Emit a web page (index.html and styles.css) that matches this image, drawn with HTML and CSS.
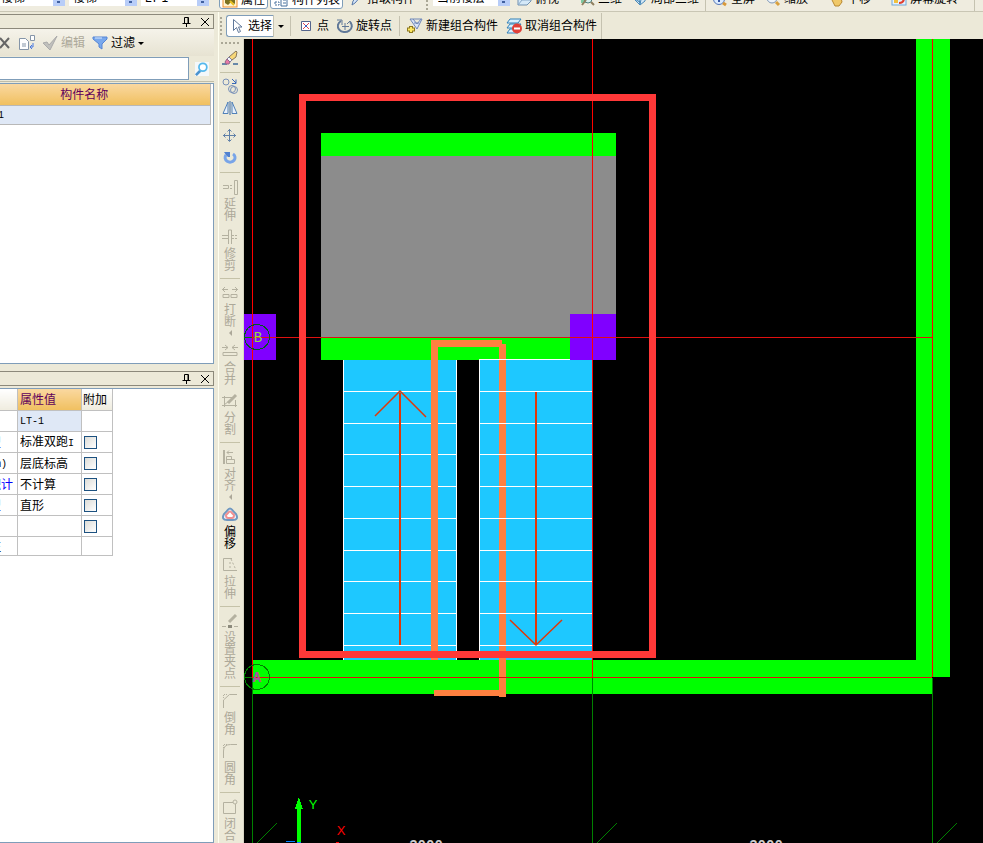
FILE: index.html
```html
<!DOCTYPE html>
<html lang="zh-CN">
<head>
<meta charset="utf-8">
<title>LT-1</title>
<link rel="stylesheet" href="styles.css">
</head>
<body>
<div class="app">
  <header class="topbar">
    <div class="combos">
      <select class="combo" aria-label="楼层"><option>楼梯</option></select>
      <select class="combo" aria-label="类型"><option>楼梯</option></select>
      <select class="combo" aria-label="构件"><option>LT-1</option></select>
    </div>
    <div class="topitems">
      <button class="tb on"><svg viewBox="0 0 16 16"><rect x="1" y="1" width="14" height="14" fill="#fff3d0" stroke="#f09030"/><path d="M3 6l5 2 5-3v7l-4-2-3 3-3-2z" fill="#7a7020"/><path d="M8 9l4 4" stroke="#e8c020" stroke-width="2"/></svg>属性</button>
      <button class="tb on"><svg viewBox="0 0 16 16"><path d="M2 3h4v3H2zM2 10h4v3H2z" fill="#fff" stroke="#49709c" stroke-dasharray="2 1"/><path d="M8 2h6v12H8z" fill="#fff" stroke="#49709c"/><path d="M10 5h3M10 8h3M10 11h3" stroke="#49709c"/></svg>构件列表</button>
      <button class="tb pick"><svg viewBox="0 0 16 16"><path d="M4 14l1-4 7-8 2 2-7 8z" fill="#d5e5fa" stroke="#5878a8"/></svg>拾取构件</button>
      <i class="grip"></i>
      <select class="combo floor" aria-label="当前楼层"><option>当前楼层</option></select>
      <button class="tb wide"><svg viewBox="0 0 16 16"><path d="M2 5l4-3h9v8l-4 4H2z" fill="#d4e8f8" stroke="#7090b0"/><path d="M2 14l4-5h9M6 2v7" fill="none" stroke="#88a8c8"/></svg>俯视</button>
      <button class="tb"><svg viewBox="0 0 16 16"><path d="M2 5h6v7H2z" fill="#7ec8a0"/><circle cx="9" cy="8" r="4" fill="#d8f0f0" stroke="#508080"/><path d="M12 11l3 3M3 14l4-5" stroke="#908060" stroke-width="2"/></svg>三维</button>
      <button class="tb"><svg viewBox="0 0 16 16"><path d="M2 8l4-5h8l-1 7-5 4z" fill="#d5e8f5" stroke="#4888b8"/><path d="M3 8l6 4M6 4l2 9M10 4l-2 9" stroke="#4888b8"/></svg>局部三维</button>
      <i class="vsep"></i>
      <button class="tb"><svg viewBox="0 0 16 16"><circle cx="7" cy="8" r="5.500" fill="#dcecff" stroke="#5878b8"/><path d="M7 5v6M4 8h6" stroke="#3858a8" stroke-width="2"/><path d="M11 12l3 2" stroke="#d89838" stroke-width="3"/></svg>全屏</button>
      <button class="tb wide"><svg viewBox="0 0 16 16"><circle cx="7" cy="7" r="5" fill="#eef4fa" stroke="#8098b8"/><path d="M11 11l3 3" stroke="#d8a040" stroke-width="3"/></svg>缩放</button>
      <button class="tb wide"><svg viewBox="0 0 16 16"><path d="M3 7l3 1V3l3 3 4 1 1 4-3 4H7z" fill="#f0c868" stroke="#b88830"/></svg>平移</button>
      <button class="tb wide"><svg viewBox="0 0 16 16"><rect x="1" y="2" width="14" height="12" fill="#e4f2ff" stroke="#70a8d8"/><path d="M3 9h4v3H3z" fill="#f0c040"/><path d="M8 12q5 0 5-5" fill="none" stroke="#e04030" stroke-width="2"/></svg>屏幕旋转</button>
      <i class="vsep"></i>
    </div>
  </header>

  <div class="main">
    <aside class="dock">
      <section class="panel list">
        <div class="title">
          <button class="tiny" aria-label="固定"><svg viewBox="0 0 10 10"><path d="M2.500 6V.5h4V6M.5 6.500h8M4.500 7v3" fill="none" stroke="#000"/><path d="M6 1v5" stroke="#000"/></svg></button>
          <button class="tiny" aria-label="关闭"><svg viewBox="0 0 10 10"><path d="M1 1l8 8M9 1L1 9" stroke="#000"/></svg></button>
        </div>
        <div class="ltools">
          <button class="tb" aria-label="删除"><svg viewBox="0 0 16 16"><path d="M4 3l9 10M13 3L4 13" stroke="#666" stroke-width="2"/></svg></button>
          <button class="tb" aria-label="复制"><svg viewBox="0 0 16 16"><path d="M.5 3.500h6l3 3v8h-9zM3 9h4M3 11h4M11.500.5h4v5h-4z" fill="#fff" stroke="#8595a8"/><path d="M14 8v4h-3M13 10l-2 2 2 2" fill="none" stroke="#4878e0"/></svg></button>
          <button class="tb off"><svg viewBox="0 0 16 16"><path d="M1 8l4-1 2 3 8-9-7 14z" fill="#c0c0bc" stroke="#aaa"/></svg>编辑</button>
          <button class="tb"><svg viewBox="0 0 16 16"><path d="M1 2h14v2l-5 5v5l-3-2V9L1 4z" fill="#79a8ec" stroke="#5585d5"/><path d="M3 3h7" stroke="#d8e8ff"/></svg>过滤<i class="down"></i></button>
        </div>
        <div class="search">
          <input type="text" aria-label="搜索构件">
          <button class="find" aria-label="搜索"><svg viewBox="0 0 16 16"><path d="M0 0h16v16H0z" fill="#f4f8fa"/><path d="M6 10l-5 5" stroke="#4c94d0" stroke-width="3"/><circle cx="9" cy="6" r="4.500" fill="#fff" stroke="#55b8ec" stroke-width="2"/></svg></button>
        </div>
        <div class="well">
          <table class="names">
            <thead><tr><th>构件名称</th></tr></thead>
            <tbody><tr><td>LT-1</td></tr></tbody>
          </table>
        </div>
      </section>
      <section class="panel props">
        <div class="title">
          <button class="tiny" aria-label="固定"><svg viewBox="0 0 10 10"><path d="M2.500 6V.5h4V6M.5 6.500h8M4.500 7v3" fill="none" stroke="#000"/><path d="M6 1v5" stroke="#000"/></svg></button>
          <button class="tiny" aria-label="关闭"><svg viewBox="0 0 10 10"><path d="M1 1l8 8M9 1L1 9" stroke="#000"/></svg></button>
        </div>
        <div class="well">
          <table class="grid">
            <thead><tr><th class="n"></th><th class="v">属性值</th><th class="c">附加</th></tr></thead>
            <tbody>
              <tr><td>名称</td><td class="cur">LT-1</td><td></td></tr>
              <tr><td class="blue">楼梯类型</td><td>标准双跑<span class="m">I</span></td><td><input type="checkbox" aria-label="楼梯类型"></td></tr>
              <tr><td>底标高<span class="m">(m)</span></td><td>层底标高</td><td><input type="checkbox" aria-label="底标高"></td></tr>
              <tr><td class="blue">建筑面积计</td><td>不计算</td><td><input type="checkbox" aria-label="建筑面积计"></td></tr>
              <tr><td class="blue">梯段类型</td><td>直形</td><td><input type="checkbox" aria-label="梯段类型"></td></tr>
              <tr><td>备注</td><td></td><td><input type="checkbox" aria-label="备注"></td></tr>
              <tr class="last"><td>其它标注</td><td></td><td></td></tr>
            </tbody>
          </table>
        </div>
      </section>
    </aside>

    <main class="work">
      <div class="toolbar">
        <i class="grip"></i>
        <button class="tb sel"><svg viewBox="0 0 16 16"><path d="M4.500 1.500v11l3-3 2 5 2-1-2-4.500h3.500z" fill="#fff" stroke="#60789a"/></svg>选择</button>
        <button class="drop" aria-label="选择方式"><i class="down"></i></button>
        <i class="vsep"></i>
        <button class="tb"><svg viewBox="0 0 16 16"><path d="M3.500 3.500h9v9h-9z" fill="#fff" stroke="#55658c"/><path d="M5 5l6 6M11 5l-6 6" stroke="#e04050"/><path d="M7 7h2v2H7z" fill="#4060c0"/></svg>点</button>
        <button class="tb"><svg viewBox="0 0 16 16"><path d="M4 3a7 6 0 1 0 9 1" fill="none" stroke="#607898" stroke-width="2"/><path d="M0 2h5v5M15 7l-2-4-3 3M8 5v7M5 8.500h7" fill="none" stroke="#607898"/></svg>旋转点</button>
        <i class="vsep"></i>
        <button class="tb"><svg viewBox="0 0 16 16"><path d="M3 1h12l-5 10zM6 1l4 5 4-5M7 5h5" fill="#d8e4f8" stroke="#7088b8"/><path d="M4 8v7M0 11.500h8" stroke="#8c7820" stroke-width="4"/><path d="M4 9v5M1 11.500h6" stroke="#ffe860" stroke-width="2"/></svg>新建组合构件</button>
        <button class="tb"><svg viewBox="0 0 16 16"><path d="M4 1h11l-3 4H1zM4 6h11l-3 4H1zM4 11h11l-3 4H1z" fill="#d8f0ff" stroke="#3080b8"/><circle cx="11" cy="10.500" r="5" fill="#e04038"/><path d="M8 10.500h6" stroke="#fff" stroke-width="2"/></svg>取消组合构件</button>
        <i class="vsep end"></i>
      </div>
      <div class="body">
        <nav class="vtools">
          <i class="hgrip"></i>
          <button class="vt" aria-label="删除"><svg viewBox="0 0 16 16"><path d="M0 14h5M11 14h5" stroke="#6888a8" stroke-width="2"/><path d="M7 7l7-6 1 1-1 5-4 3z" fill="#f8d878" stroke="#88775a"/><path d="M7 7l3 3-2 2-3-3z" fill="#f4f4fa" stroke="#8080a0"/><path d="M5 9l3 3-1 2H4l-1-2z" fill="#e878a8" stroke="#906888"/></svg></button>
          <hr>
          <button class="vt" aria-label="复制"><svg viewBox="0 0 16 16"><g fill="none" stroke="#7890b8"><circle cx="4" cy="4" r="3"/><circle cx="10" cy="11" r="3.500"/><circle cx="12" cy="12" r="3.500"/></g><path d="M10 1l4 4M14 1.500V5.500h-4" fill="none" stroke="#3868b8"/></svg></button>
          <button class="vt" aria-label="镜像"><svg viewBox="0 0 16 16"><path d="M6 2v11.500H1zM10 2v11.500h5z" fill="#e8f0fa" stroke="#5080b8"/><path d="M8 1v14" stroke="#3868a8"/></svg></button>
          <hr>
          <button class="vt" aria-label="移动"><svg viewBox="0 0 16 16"><path d="M7.500 1v12M1 7.500h13M5.500 3.500l2-2 2 2M5.500 11.500l2 2 2-2M3.500 5.500l-2 2 2 2M11.500 5.500l2 2-2 2" fill="none" stroke="#6080a8"/></svg></button>
          <button class="vt" aria-label="旋转"><svg viewBox="0 0 16 16"><path d="M4 5a5 4.500 0 1 0 7-1" fill="none" stroke="#78a4e8" stroke-width="3"/><path d="M2 2h6v5H6L4 5z" fill="#5080d0"/></svg></button>
          <hr>
          <button class="vt off"><svg viewBox="0 0 16 16"><path d="M1 6.500h5.500v3H1M8 6.500h2M8 9.500h2M12.500 1.500h3v14h-3z"/></svg><span>延伸</span></button>
          <button class="vt off"><svg viewBox="0 0 16 16"><path d="M0 6.500h6M0 9.500h6M10 6.500h2M13 6.500h2M10 9.500h2M13 9.500h2M6.500 15V1h3v14"/></svg><span>修剪</span></button>
          <hr>
          <button class="vt off"><svg viewBox="0 0 16 16"><path d="M0 4.500h6M3 2L.5 4.500 3 7M10 4.500h6M13 2l2.500 2.500L13 7M1 9.500h6v3H1zM9 9.500h6v3H9z"/></svg><span>打断</span><i class="left"></i></button>
          <button class="vt off"><svg viewBox="0 0 16 16"><path d="M0 4.500h6M3 2l3 2.500L3 7M10 4.500h6M13 2l-3 2.500L13 7M1 9.500h14v3H1z"/></svg><span>合并</span></button>
          <button class="vt off"><svg viewBox="0 0 16 16"><path d="M0 4.500h10M2.500 3v11M0 12.500h15M13.500 7v7M2 12l5-4"/><path d="M6 10l8-8" stroke-width="3"/></svg><span>分割</span></button>
          <hr>
          <button class="vt off"><svg viewBox="0 0 16 16"><path d="M2 1v14" stroke-width="2"/><path d="M5 3.500h6M7 1.500L5 3.500l2 2M4.500 7.500h5v3h3v4h-8zM4 10.500h6"/></svg><span>对齐</span><i class="left"></i></button>
          <button class="vt"><svg viewBox="0 0 16 16"><path d="M5 4q3-5 6 0l3 3q3 6-3 6H5q-6 0-3-6z" fill="#eaf4ff" stroke="#7098c0" stroke-width="2"/><path d="M6 6q2-3 4 0l2 2q0 3-2 3H6q-2 0-2-3z" fill="#fff" stroke="#f09090" stroke-width="2"/></svg><span>偏移</span></button>
          <button class="vt off"><svg viewBox="0 0 16 16"><path d="M10 1.500H1.500v12H15"/><path d="M9 2l5 11M8 5v8" stroke-dasharray="2 2"/></svg><span>拉伸</span></button>
          <hr>
          <button class="vt off"><svg viewBox="0 0 16 16"><path d="M7 9l7-7" stroke-width="3"/><path d="M0 13.500h4M12 13.500h4"/><path d="M6 12h4v3H6z" fill="#8c8a7c" stroke="none"/></svg><span>设置夹点</span></button>
          <hr>
          <button class="vt off"><svg viewBox="0 0 16 16"><path d="M1.500 15V7l6-5.500H15"/><path d="M1.500 5V1.500H6" stroke-dasharray="1 1"/></svg><span>倒角</span></button>
          <button class="vt off"><svg viewBox="0 0 16 16"><path d="M1.500 15V8q0-6.500 7-6.500H15"/><path d="M1.500 5V1.500H6" stroke-dasharray="1 1"/></svg><span>圆角</span></button>
          <hr>
          <button class="vt off"><svg viewBox="0 0 16 16"><path d="M11 3.500H1.500v11h12V5"/><circle cx="13" cy="3" r="2"/></svg><span>闭合</span></button>
        </nav>
        <svg class="canvas" role="img" aria-label="平面图">
          <g transform="translate(-244 -39)" shape-rendering="crispEdges">
            <path fill="#0f0" d="M916 39h34v638h-18v17H252v-34h664zM321 133h295v23H321zM321 337h295v23H321z"/>
            <path fill="#8c8c8c" d="M321 156h295v181H321z"/>
            <path fill="#1ec8ff" d="M343 360h114v300H343zM479 360h114v300H479z"/>
            <path fill="#ff8040" d="M499 344h7v353h-7zM434 690h66v6h-66z"/>
            <path fill="none" stroke="#fff" d="M343.500 360v300M456.500 360v300M479.500 359v301M479 359.500h113M343 391.500h249M343 423.500h249M343 454.500h249M343 486.500h249M343 518.500h249M343 550.500h249M343 581.500h249M343 613.500h249M343 645.500h249"/>
            <path fill="#000" d="M457 360h22v300h-22z"/>
            <path fill="#ff8040" d="M431 340h71v7h-64v313h-7zM499 344h7v15h-7z"/>
            <path fill="none" stroke="#e03808" stroke-width="2" d="M400 393v252M536 392v253"/>
            <path fill="none" stroke="#e03808" stroke-width="1.500" shape-rendering="auto" d="M375 416l25-25 26 26M510 620l26 25 26-25"/>
            <path fill="#8000ff" d="M244 314h32v46h-32zM570 314h46v46h-46z"/>
            <path fill="none" stroke="#f00" d="M252.500 39v638M592.500 39v638M932.500 39v638"/>
            <path fill="none" stroke="#e01010" d="M252 337.500h680M252 677.500h680"/>
            <path fill="none" stroke="#008000" d="M252.500 678v165M592.500 678v165M932.500 678v165M244 337.500h8M244 677.500h8M257 843l20-20M597 843l20-20M937 843l20-20"/>
            <circle cx="257" cy="337" r="12.500" fill="none" stroke="#005a20"/>
            <circle cx="257" cy="677" r="12.500" fill="none" stroke="#008000"/>
            <path fill="none" stroke="#ff3838" stroke-width="7" d="M302.500 97.500h350v557h-350z"/>
            <path fill="#0f0" d="M299 797l4 12h-2v34h-4v-34h-2z"/>
            <path fill="#0080ff" d="M286 841h9v1h-9zM297 842h4v1h-4z"/>
            <path fill="#f00" d="M336 842h3v1h-3z"/>
          </g>
          <g transform="translate(-244 -39)" text-anchor="middle">
            <text class="axis b" x="258" y="342">B</text>
            <text class="axis a" x="257" y="682">A</text>
            <text class="ucs y" x="313" y="809">Y</text>
            <text class="ucs x" x="341" y="835">X</text>
            <text class="dim" x="426" y="850">3000</text>
            <text class="dim" x="766" y="850">3000</text>
          </g>
        </svg>
      </div>
    </main>
  </div>
</div>
</body>
</html>
```
FILE: styles.css
```css
* { box-sizing: border-box; }
body {
  margin: 0;
  background: #ece9d8;
  color: #000;
  font: 12px/12px "Liberation Sans", "Noto Sans CJK SC", sans-serif;
}
button, input, select { font: inherit; color: inherit; }
button { border: 0; margin: 0; padding: 0; background: none; }
svg { display: block; flex: none; }
.app { display: flex; flex-direction: column; height: 100vh; overflow: hidden; }

/* upper toolbar, scrolled half out of view */
.topbar {
  display: flex;
  align-items: flex-end;
  height: 12px;
  flex: none;
  overflow: hidden;
  border-bottom: 1px solid #c9c6b4;
  background: #efecdf;
}
.combos { display: flex; gap: 4px; width: 218px; flex: none; margin-left: -3px; padding-bottom: 5px; }
.combo {
  appearance: none;
  width: 68px;
  height: 16px;
  padding: 0 4px;
  border: 0;
  border-radius: 0;
  background: linear-gradient(#4060a0, #4060a0) right 5px bottom 3px / 3px 2px no-repeat,
    linear-gradient(#b8cdf8, #b8cdf8) right / 12px 100% no-repeat, #fff;
}
.topitems { display: flex; align-items: flex-end; gap: 2px; height: 24px; flex: none; margin-left: 4px; }
.topitems .floor { width: 77px; margin-bottom: 5px; }
.topitems .tb { height: 24px; padding: 0 4px; }
.topitems .on { height: 19px; margin-bottom: 2px; padding: 0 2px; border: 1px solid #7f9db9; border-radius: 3px; background: #fff; }
.topitems .pick { padding: 0 3px; margin-right: 3px; }
.topitems .wide { margin-right: 10px; }
.topitems .vsep { margin: 0; }
.tb { display: flex; align-items: center; gap: 3px; white-space: nowrap; }
.tb svg { width: 16px; height: 16px; }
.off { color: #aca899; }
.down { border: 3px solid transparent; border-top-color: #000; border-bottom: 0; }
.vsep { width: 1px; height: 20px; margin: 0 3px; background: #c5c2b0; flex: none; }
.grip { width: 2px; height: 19px; margin: 0 3px; flex: none; background: repeating-linear-gradient(#aaa796 0 2px, transparent 2px 4px); }

.main { display: flex; flex: 1; min-height: 0; }
.dock { display: flex; flex-direction: column; gap: 7px; width: 214px; flex: none; padding-top: 2px; }
.panel { display: flex; flex-direction: column; }
.list { height: 350px; flex: none; }
.props { flex: 1; min-height: 0; }
.title {
  display: flex;
  justify-content: flex-end;
  align-items: center;
  gap: 8px;
  height: 15px;
  flex: none;
  padding: 1px 3px 0 0;
  border: 1px solid #8c897b;
  border-left: 0;
}
.tiny svg { width: 10px; height: 10px; }
.ltools { display: flex; align-items: center; gap: 7px; height: 27px; flex: none; margin-left: -4px; padding-top: 1px; background: linear-gradient(#f5f3ea, #e7e3d2); }
.search { display: flex; height: 26px; flex: none; border-bottom: 1px solid #c0bda8; }
.search input { flex: 1; min-width: 0; margin: 1px 0; border: 1px solid #7f9db9; border-left: 0; background: #fff; }
.find { display: flex; align-items: center; justify-content: center; width: 25px; }
.find svg { width: 14px; height: 14px; }
.well {
  flex: 1;
  min-height: 0;
  overflow: hidden;
  background: #fff;
  border: 1px solid #7f9db9;
  border-left: 0;
}
.list .well { margin-top: 1px; }
.names { width: 255px; margin-left: -44px; border-collapse: collapse; }
.names th {
  height: 21px;
  padding: 2px 0 0 2px;
  font-weight: normal;
  color: #60005c;
  background: linear-gradient(#fad8a0, #f0c060);
  border-right: 1px solid #b8b8b8;
}
.names td { height: 19px; padding: 3px 0 0 23px; font: 10px/12px "Liberation Mono", monospace; background: #dfe8f6; border: 1px solid #b8b8b8; }
.props .well { margin-top: 2px; }
.grid { width: 163px; margin-left: -50px; border-collapse: collapse; table-layout: fixed; }
.grid th, .grid td { height: 21px; padding: 2px 2px 0; border: 1px solid #c0c0c0; text-align: left; font-weight: normal; white-space: nowrap; }
.grid th { background: linear-gradient(#fff, #efecdf); border-top: 0; }
.grid .n { width: 67px; }
.grid .c { width: 31px; padding: 2px 1px 0; }
.grid .v { color: #60005c; background: linear-gradient(#fad8a0, #f0c060); }
.grid .cur { background: #dfe8f6; font: 10px/12px "Liberation Mono", monospace; }
.grid .last td { height: 19px; }
.m { font: 10px/12px "Liberation Mono", monospace; }
.blue { color: #00f; }
.grid input {
  appearance: none;
  display: block;
  width: 13px;
  height: 13px;
  margin: 0;
  border: 1px solid #1c5180;
  background: linear-gradient(135deg, #dcdcd7, #fff);
}

.work { display: flex; flex-direction: column; flex: 1; min-width: 0; margin-left: 4px; border-left: 1px solid #fffff0; }
.toolbar { display: flex; align-items: center; height: 27px; flex: none; padding-top: 1px; }
.toolbar .tb { padding: 0 4px; }
.toolbar .sel { height: 22px; padding: 0 1px 0 2px; border: 1px solid #7f9db9; border-right-color: #c5c2b0; border-radius: 3px 0 0 3px; background: #fff; }
.toolbar .grip { margin: 0 4px 0 1px; }
.toolbar .end { height: 26px; margin: 0; }
.drop { display: flex; justify-content: center; width: 13px; }
.body { display: flex; flex: 1; min-height: 0; }
.vtools {
  display: flex;
  flex-direction: column;
  align-items: center;
  width: 25px;
  flex: none;
  overflow: hidden;
  padding-right: 2px;
  border-right: 1px solid #d8d5c4;
}
.hgrip { width: 18px; height: 2px; margin: 3px 0; flex: none; background: repeating-linear-gradient(90deg, #aaa796 0 2px, transparent 2px 4px); }
.vtools hr { width: 20px; height: 1px; margin: 3px 0 2px; border: 0; flex: none; background: #c5c2a8; }
.vt { display: flex; flex-direction: column; align-items: center; flex: none; padding: 3px 0; }
.vt svg { width: 16px; height: 16px; }
.vt span { width: 12px; margin-top: 3px; word-break: break-all; }
.vt:has(span) { padding: 4px 0 3px; }
.off svg { fill: none; stroke: #b4b1a0; }
.left { height: 6px; margin-top: 2px; border: 3px solid transparent; border-right-color: #aca899; border-left: 0; }
.canvas { flex: 1; min-width: 0; height: 100%; background: #000; }
.axis { font: 14px "Liberation Mono", monospace; }
.b { fill: #98d840; }
.a { fill: #b050a0; font-weight: bold; }
.ucs { font: 13px "Liberation Sans", sans-serif; }
.y { fill: #0f0; }
.x { fill: #f00; }
.dim { font: bold 14px "Liberation Mono", monospace; fill: #ccc; }
```
